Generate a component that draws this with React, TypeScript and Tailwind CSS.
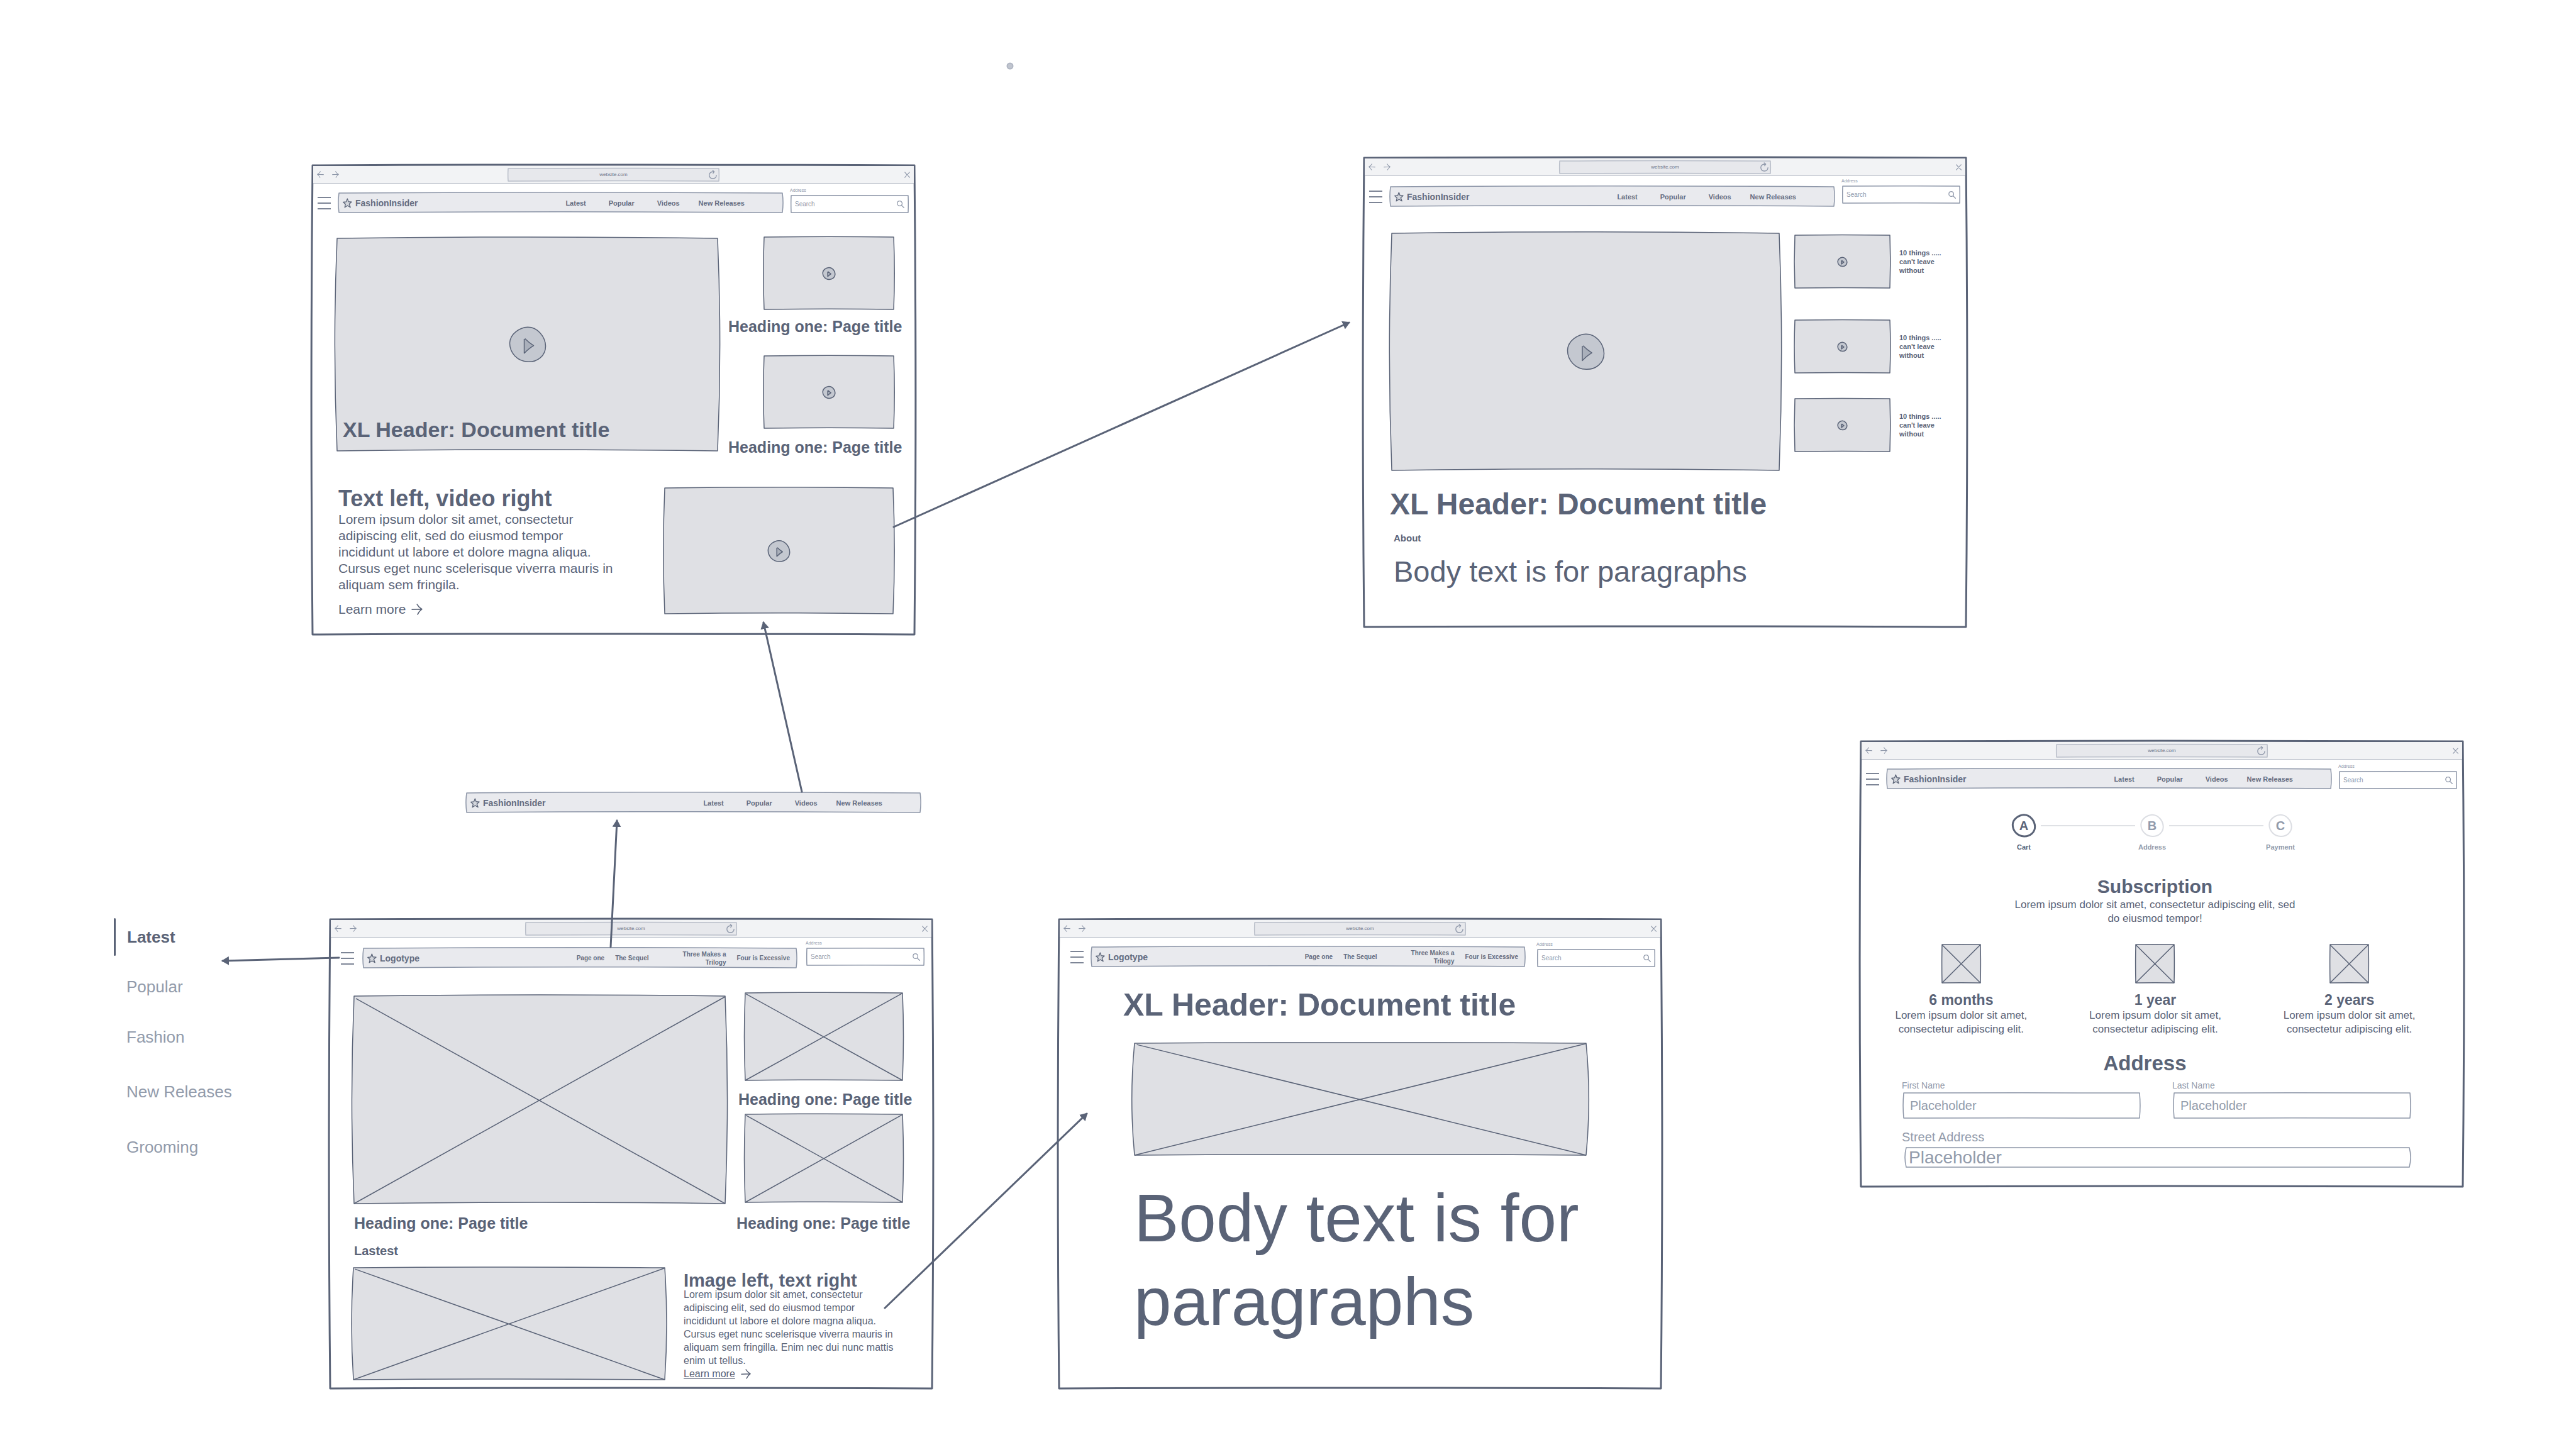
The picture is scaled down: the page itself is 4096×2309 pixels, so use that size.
import { useId, type ReactNode } from "react";
import { clsx } from "clsx";

/* Hand-drawn rectangle that stretches to its parent. */
function Outline({
  bow = 1.2,
  lift = 1.2,
  className = "inset-0 size-full fill-[#dfe0e4] stroke-[#5a6377]",
  width = 1.5,
  cross = false,
}: {
  bow?: number;
  lift?: number;
  className?: string;
  width?: number;
  cross?: boolean;
}) {
  return (
    <svg
      viewBox="0 0 100 100"
      preserveAspectRatio="none"
      aria-hidden="true"
      className={clsx("pointer-events-none absolute overflow-visible", className)}
      strokeWidth={width}
      strokeLinejoin="round"
    >
      <path
        vectorEffect="non-scaling-stroke"
        d={`M0,0 Q50,${-lift} 100,0 Q${100 + bow},50 100,100 Q50,${100 - lift} 0,100 Q${-bow},50 0,0 Z`}
      />
      {cross && (
        <path vectorEffect="non-scaling-stroke" fill="none" d="M0.5,1.2 L100,100 M0,100 L100,0.3" />
      )}
    </svg>
  );
}

const stroke = {
  fill: "none",
  stroke: "currentColor",
  strokeLinecap: "round" as const,
  strokeLinejoin: "round" as const,
};

function ArrowIcon({ className, flip = false }: { className: string; flip?: boolean }) {
  return (
    <svg viewBox="0 0 16 16" aria-hidden="true" className={clsx(className, flip && "-scale-x-100")} {...stroke} strokeWidth={1.5}>
      <path d="M1 8.2 L15 7.7 M8.2 1 C9.6 3.6 12 6 15 7.7 C12.4 9.6 10.2 12.2 9 15" />
    </svg>
  );
}

function ReloadIcon() {
  return (
    <svg viewBox="0 0 18 20" aria-hidden="true" className="h-[15px] w-[13px]" {...stroke} strokeWidth={1.8}>
      <path d="M16.8 11.5 C16.6 16 13.4 19 9 19 C4.4 18.8 1.2 15.6 1.1 11 C1.4 6.4 5 3.8 11.4 3.8 M8.6 1 L12 3.9 L9.4 7.4" />
    </svg>
  );
}

function CloseIcon() {
  return (
    <svg viewBox="0 0 12 13" aria-hidden="true" className="h-[10px] w-[9px]" {...stroke} strokeWidth={1.6}>
      <path d="M1 1 C4 5 8 9 11.4 12 M11 1 C8 4 4 8.5 1 12" />
    </svg>
  );
}

function SearchIcon() {
  return (
    <svg viewBox="0 0 17 17" aria-hidden="true" className="size-[12px]" {...stroke} strokeWidth={1.8}>
      <path d="M6.4 1 C9.4 0.9 12 3.4 12 6.6 C12 9.8 9.5 12 6.7 11.9 C3.6 11.9 1.2 9.4 1.2 6.4 C1.3 3.3 3.5 1 6.4 1 Z M10.6 10.6 L16 16" />
    </svg>
  );
}

function StarIcon() {
  return (
    <svg
      viewBox="0 0 20 21"
      aria-hidden="true"
      className="h-[16px] w-[15px] shrink-0 fill-[#d3d6dc] stroke-[#5a6377]"
      strokeWidth={1.7}
      strokeLinejoin="round"
    >
      <path d="M9.8 1.2 L12.1 7.5 L18.8 7.9 L13.7 12.5 L16.2 19.5 L10.1 15.8 L4.2 19.6 L5.8 12.7 L1 8.5 L7.4 7.6 Z" />
    </svg>
  );
}

const blob =
  "M200,63 C265,62 318,125 320,190 C320,255 265,297 203,295 C130,293 80,235 80,170 C82,105 150,65 200,63 Z";

function PlayButton({ className }: { className: string }) {
  return (
    <button type="button" aria-label="Play video" className={clsx("relative", className)}>
      <svg viewBox="78 60 244 240" className="size-full overflow-visible stroke-[#5a6377]" strokeWidth={1.5} strokeLinejoin="round">
        <path vectorEffect="non-scaling-stroke" className="fill-[#c4c8d0]" d={blob} />
        <path vectorEffect="non-scaling-stroke" className="fill-[#aab0bb]" d="M177,142 V238 Q210,204 240,187 Q210,168 182,140" />
      </svg>
    </button>
  );
}

function Video({ className, play, children }: { className: string; play: string; children?: ReactNode }) {
  return (
    <div className={clsx("relative grid shrink-0 place-items-center", className)}>
      <Outline />
      <PlayButton className={play} />
      {children}
    </div>
  );
}

function Picture({ className, bow, lift }: { className: string; bow?: number; lift?: number }) {
  return (
    <div role="img" aria-label="Image placeholder" className={clsx("relative shrink-0", className)}>
      <Outline cross bow={bow} lift={lift} />
    </div>
  );
}

function NavBar({ brand, className, children }: { brand: string; className?: string; children: ReactNode }) {
  return (
    <nav aria-label={brand} className={clsx("flex h-[31px] items-center pl-[6px]", className)}>
      <Outline bow={0.3} lift={8} className="inset-0 size-full fill-[#e9eaee] stroke-[#8d96a8]" />
      <a href="#home" className="relative flex items-center gap-[5px] text-[14px] leading-[20px] font-bold text-[#646c80]">
        <StarIcon />
        {brand}
      </a>
      {children}
    </nav>
  );
}

function FashionNav({ className }: { className?: string }) {
  return (
    <NavBar brand="FashionInsider" className={className}>
      <div className="relative mr-[60px] ml-auto flex gap-[36px] text-[11px] leading-[16px] font-bold text-[#646c80]">
        <a href="#latest">Latest</a>
        <a href="#popular">Popular</a>
        <a href="#videos">Videos</a>
        <a href="#new" className="-ml-[6px]">
          New Releases
        </a>
      </div>
    </NavBar>
  );
}

function LogotypeNav({ className }: { className?: string }) {
  return (
    <NavBar brand="Logotype" className={className}>
      <div className="relative mr-[10px] ml-auto flex items-center gap-[17px] text-[10px] leading-[13px] font-bold text-[#646c80]">
        <a href="#one">Page one</a>
        <a href="#two">The Sequel</a>
        <a href="#three" className="ml-[30px] w-[76px] text-right">
          Three Makes a Trilogy
        </a>
        <a href="#four">Four is Excessive</a>
      </div>
    </NavBar>
  );
}

function SearchField({ className }: { className?: string }) {
  const id = useId();
  return (
    <div className={clsx("shrink-0", className)}>
      <label htmlFor={id} className="block text-[7px] leading-[8px] text-[#8f98aa]">
        Address
      </label>
      <div className="relative mt-1 ml-[2px] flex h-[27px] items-center justify-between px-[6px] text-[#8f98aa]">
        <Outline bow={0.3} lift={2} className="inset-0 size-full fill-white stroke-[#8d96a8]" />
        <input
          id={id}
          type="search"
          placeholder="Search"
          className="relative w-0 min-w-0 flex-1 bg-transparent text-[10px] leading-[16px] outline-none placeholder:text-[#8f98aa]"
        />
        <button type="button" aria-label="Search" className="relative">
          <SearchIcon />
        </button>
      </div>
    </div>
  );
}

function Browser({
  className,
  toolbar,
  nav,
  search,
  children,
}: {
  className: string;
  toolbar: string;
  nav: ReactNode;
  search: string;
  children: ReactNode;
}) {
  return (
    <section className={clsx("absolute flex w-[961px] flex-col p-[2px]", className)}>
      <div className="relative flex-1">
        <Outline bow={0.4} lift={0.3} width={3} className="inset-0 size-full fill-white stroke-[#5a6377]" />
        <div className="relative mx-[1px] mt-[1px] flex h-[28px] items-center border-b border-[#b9bec9] bg-[#f2f3f5] px-[6px] text-[#8f98aa]">
          <div className="flex flex-1 gap-[13px]">
            <button type="button" aria-label="Back">
              <ArrowIcon flip className="size-[11px]" />
            </button>
            <button type="button" aria-label="Forward">
              <ArrowIcon className="size-[11px]" />
            </button>
          </div>
          <div className="relative flex h-[20px] w-[335px] items-center">
            <Outline bow={0.2} lift={5} className="inset-0 size-full fill-[#e7e8ec] stroke-[#b9bec9]" />
            <input
              aria-label="Page address"
              readOnly
              value="website.com"
              className="relative w-full bg-transparent text-center text-[8px] leading-[12px] text-[#6b7387] outline-none"
            />
            <button type="button" aria-label="Reload" className="absolute right-[3px]">
              <ReloadIcon />
            </button>
          </div>
          <div className="flex flex-1 justify-end">
            <button type="button" aria-label="Close">
              <CloseIcon />
            </button>
          </div>
        </div>
        <div className="relative -mx-[2px]">
          <header className={clsx("flex items-end", toolbar)}>
            <button type="button" aria-label="Menu" className="mb-[5px] flex w-[21px] shrink-0 flex-col gap-[7px]">
              <span className="h-[2px] bg-[#7d8596]" />
              <span className="h-[2px] bg-[#7d8596]" />
              <span className="h-[2px] bg-[#7d8596]" />
            </button>
            {nav}
            <SearchField className={search} />
          </header>
          {children}
        </div>
      </div>
    </section>
  );
}

function Heading({ className }: { className?: string }) {
  return <h3 className={clsx("text-[25px] leading-[32px] font-bold whitespace-nowrap", className)}>Heading one: Page title</h3>;
}

function HomeVideoPage() {
  return (
    <Browser
      className="top-[261px] left-[495px] h-[750px]"
      toolbar="h-[46px] pr-[12px] pl-[10px]"
      nav={<FashionNav className="relative mr-[12px] ml-[13px] flex-1" />}
      search="w-[188px]"
    >
      <div className="flex justify-between pr-[18px] pl-[41px]">
        <Video className="mt-[41px] h-[338px] w-[605px]" play="size-[58px]">
          <h2 className="absolute bottom-[14px] left-[9px] text-[34px] leading-[40px] font-bold">XL Header: Document title</h2>
        </Video>
        <div className="flex w-[280px] flex-col">
          <Video className="mt-[39px] mr-[17px] h-[115px] w-[206px] self-end" play="size-[20px]" />
          <Heading className="mt-[11px]" />
          <Video className="mt-[31px] mr-[17px] h-[115px] w-[206px] self-end" play="size-[20px]" />
          <Heading className="mt-[14px]" />
        </div>
      </div>
      <div className="mt-[46px] flex justify-between pr-[36px] pl-[43px]">
        <div className="text-[21px] leading-[26px]">
          <h2 className="text-[36px] leading-[40px] font-bold">Text left, video right</h2>
          <p className="w-[450px]">
            Lorem ipsum dolor sit amet, consectetur
            <br />
            adipiscing elit, sed do eiusmod tempor
            <br />
            incididunt ut labore et dolore magna aliqua.
            <br />
            Cursus eget nunc scelerisque viverra mauris in
            <br />
            aliquam sem fringila.
          </p>
          <a href="#more" className="mt-[13px] flex items-center gap-[9px]">
            Learn more
            <ArrowIcon className="size-[18px]" />
          </a>
        </div>
        <Video className="mt-[3px] h-[200px] w-[363px]" play="size-[35px]" />
      </div>
    </Browser>
  );
}

function VideoPage() {
  return (
    <Browser
      className="top-[249px] left-[2167px] h-[750px]"
      toolbar="h-[48px] pr-[12px] pl-[10px]"
      nav={<FashionNav className="relative mr-[12px] ml-[13px] flex-1" />}
      search="mb-[5px] w-[188px]"
    >
      <div className="flex gap-[25px] pl-[46px]">
        <Video className="mt-[43px] h-[377px] w-[616px]" play="size-[59px]" />
        <ul className="mt-[46px] text-[11px] leading-[14px] font-bold">
          {["mb-[51px]", "mb-[41px]", ""].map((gap, i) => (
            <li key={i} className={clsx("flex items-center gap-[15px]", gap)}>
              <Video className="h-[84px] w-[151px]" play="size-[15px]" />
              <p>
                10 things .....
                <br />
                can't leave
                <br />
                without
              </p>
            </li>
          ))}
        </ul>
      </div>
      <div className="mt-[26px] pl-[43px]">
        <h1 className="text-[48px] leading-[56px] font-bold">XL Header: Document title</h1>
        <h2 className="mt-[16px] ml-[6px] text-[15px] leading-[20px] font-bold">About</h2>
        <p className="mt-[17px] ml-[6px] text-[47px] leading-[52px]">Body text is for paragraphs</p>
      </div>
    </Browser>
  );
}

function HomeImagePage() {
  return (
    <Browser
      className="top-[1460px] left-[523px] h-[750px]"
      toolbar="h-[48px] pr-[15px] pl-[19px]"
      nav={<LogotypeNav className="relative mr-[15px] ml-[15px] flex-1" />}
      search="mb-[4px] w-[188px]"
    >
      <div className="flex justify-between pr-[33px] pl-[40px]">
        <div className="pt-[45px]">
          <Picture className="h-[330px] w-[590px]" />
          <Heading className="mt-[15px]" />
          <h3 className="mt-[16px] text-[20px] leading-[24px] font-bold">Lastest</h3>
        </div>
        <div className="w-[280px] pt-[40px]">
          <Picture className="ml-[14px] h-[139px] w-[250px]" />
          <Heading className="mt-[14px] ml-[3px]" />
          <Picture className="mt-[8px] ml-[14px] h-[140px] w-[250px]" />
          <Heading className="mt-[17px]" />
        </div>
      </div>
      <div className="mt-[15px] flex gap-[30px] pl-[39px]">
        <Picture className="h-[178px] w-[495px]" />
        <div className="mt-[4px] text-[16px] leading-[21px]">
          <h2 className="text-[29px] leading-[32px] font-bold">Image left, text right</h2>
          <p className="-mt-1">
            Lorem ipsum dolor sit amet, consectetur
            <br />
            adipiscing elit, sed do eiusmod tempor
            <br />
            incididunt ut labore et dolore magna aliqua.
            <br />
            Cursus eget nunc scelerisque viverra mauris in
            <br />
            aliquam sem fringilla. Enim nec dui nunc mattis
            <br />
            enim ut tellus.
          </p>
          <a href="#more" className="flex items-center gap-[9px]">
            <span className="underline underline-offset-2">Learn more</span>
            <ArrowIcon className="size-[16px]" />
          </a>
        </div>
      </div>
    </Browser>
  );
}

function ArticlePage() {
  return (
    <Browser
      className="top-[1460px] left-[1682px] h-[750px]"
      toolbar="h-[46px] pr-[12px] pl-[20px]"
      nav={<LogotypeNav className="relative mr-[19px] ml-[13px] flex-1" />}
      search="w-[188px]"
    >
      <div className="pl-[104px]">
        <h1 className="mt-[31px] text-[50px] leading-[60px] font-bold">XL Header: Document title</h1>
        <Picture className="mt-[31px] ml-[18px] h-[178px] w-[718px]" />
        <p className="mt-[34px] ml-[17px] text-[107px] leading-[133px]">
          Body text is for
          <br />
          paragraphs
        </p>
      </div>
    </Browser>
  );
}

function Step({ letter, name, active = false }: { letter: string; name: string; active?: boolean }) {
  return (
    <li className={clsx("flex w-[54px] flex-col items-center", active ? "text-[#5a6377]" : "text-[#929bab]")}>
      <span className="relative grid size-[36px] place-items-center text-[20px] leading-[24px] font-bold">
        <svg
          viewBox="78 60 244 240"
          aria-hidden="true"
          className={clsx("absolute inset-0 size-full overflow-visible", active ? "stroke-[#5a6377]" : "stroke-[#dcdee3]")}
          fill="none"
          strokeWidth={active ? 3 : 2}
        >
          <path vectorEffect="non-scaling-stroke" d={blob} />
        </svg>
        {letter}
      </span>
      <span className="mt-[8px] text-[11px] leading-[16px] font-bold">{name}</span>
    </li>
  );
}

function TextField({
  label,
  labelClass,
  boxClass,
  inputClass,
  className,
}: {
  label: string;
  labelClass: string;
  boxClass: string;
  inputClass: string;
  className?: string;
}) {
  const id = useId();
  return (
    <div className={className}>
      <label htmlFor={id} className={clsx("block text-[#929bab]", labelClass)}>
        {label}
      </label>
      <div className={clsx("relative flex items-center", boxClass)}>
        <Outline bow={0.5} lift={0.8} className="inset-0 size-full fill-white stroke-[#8d96a8]" />
        <input
          id={id}
          type="text"
          placeholder="Placeholder"
          className={clsx("relative w-full bg-transparent outline-none placeholder:text-[#929bab]", inputClass)}
        />
      </div>
    </div>
  );
}

function CheckoutPage() {
  return (
    <Browser
      className="top-[1177px] left-[2957px] h-[712px]"
      toolbar="h-[46px] pr-[12px] pl-[10px]"
      nav={<FashionNav className="relative mr-[12px] ml-[13px] flex-1" />}
      search="w-[188px]"
    >
      <ol className="mt-[41px] ml-[234px] flex">
        <Step letter="A" name="Cart" active />
        <li aria-hidden="true" className="mt-[17px] h-[2px] w-[150px] bg-[#dfe1e5]" />
        <Step letter="B" name="Address" />
        <li aria-hidden="true" className="mt-[17px] h-[2px] w-[150px] bg-[#dfe1e5]" />
        <Step letter="C" name="Payment" />
      </ol>
      <div className="mt-[37px] pr-[22px] text-center text-[17px] leading-[22px]">
        <h2 className="text-[30px] leading-[36px] font-bold">Subscription</h2>
        <p>
          Lorem ipsum dolor sit amet, consectetur adipiscing elit, sed
          <br />
          do eiusmod tempor!
        </p>
      </div>
      <div className="mt-[30px] mr-[28px] ml-[7px] grid grid-cols-3 text-center text-[17px] leading-[22px]">
        {["6 months", "1 year", "2 years"].map((term) => (
          <div key={term} className="flex flex-col items-center">
            <Picture className="size-[61px]" />
            <h3 className="mt-[13px] text-[23px] leading-[28px] font-bold">{term}</h3>
            <p>
              Lorem ipsum dolor sit amet,
              <br />
              consectetur adipiscing elit.
            </p>
          </div>
        ))}
      </div>
      <form>
        <h2 className="mt-[23px] pr-[54px] text-center text-[33px] leading-[40px] font-bold">Address</h2>
        <div className="mt-[6px] flex gap-[52px] pl-[67px]">
          <TextField
            label="First Name"
            labelClass="text-[14px] leading-[18px]"
            boxClass="mt-[3px] ml-[3px] h-[40px] w-[375px]"
            inputClass="px-[10px] text-[20px] leading-[26px]"
          />
          <TextField
            label="Last Name"
            labelClass="text-[14px] leading-[18px]"
            boxClass="mt-[3px] ml-[3px] h-[40px] w-[375px]"
            inputClass="px-[10px] text-[20px] leading-[26px]"
          />
        </div>
        <TextField
          className="mt-[18px] pl-[67px]"
          label="Street Address"
          labelClass="text-[20px] leading-[24px]"
          boxClass="mt-[5px] ml-[7px] h-[31px] w-[800px]"
          inputClass="px-[4px] text-[28px] leading-[31px]"
        />
      </form>
    </Browser>
  );
}

function SideMenu() {
  return (
    <nav aria-label="Sections" className="absolute top-[1460px] left-[181px] flex flex-col text-[26px] leading-[32px] text-[#929bab]">
      <a href="#latest" className="flex items-center gap-[18px] font-bold text-[#5a6377]">
        <span className="h-[60px] w-[3px] rounded-full bg-[#5a6377]" />
        Latest
      </a>
      <a href="#popular" className="mt-[33px] ml-[20px]">
        Popular
      </a>
      <a href="#fashion" className="mt-[48px] ml-[20px]">
        Fashion
      </a>
      <a href="#new" className="mt-[55px] ml-[20px]">
        New Releases
      </a>
      <a href="#grooming" className="mt-[56px] ml-[20px]">
        Grooming
      </a>
    </nav>
  );
}

const links: [number, number, number, number][] = [
  [1421, 838, 2145, 513],
  [1275, 1259, 1214, 990],
  [971, 1506, 981, 1305],
  [539, 1523, 354, 1528],
  [1407, 2080, 1728, 1771],
];

function Connectors() {
  return (
    <svg
      aria-hidden="true"
      className="pointer-events-none absolute top-0 left-0 size-full"
      stroke="#5a6377"
      strokeWidth={3}
      strokeLinecap="round"
    >
      <defs>
        <marker id="tip" viewBox="0 0 12 14" refX="10" refY="7" markerWidth="12" markerHeight="14" markerUnits="userSpaceOnUse" orient="auto">
          <path d="M0,0 L12,7 L0,14 Z" fill="#5a6377" stroke="none" />
        </marker>
      </defs>
      {links.map(([x1, y1, x2, y2]) => (
        <line key={x1} x1={x1} y1={y1} x2={x2} y2={y2} markerEnd="url(#tip)" />
      ))}
      <circle cx={1606} cy={105} r={4.5} fill="#c0c5cf" stroke="#b0b6c3" strokeWidth={2} />
    </svg>
  );
}

export default function App() {
  return (
    <main className="relative min-h-screen w-full overflow-hidden bg-white font-['Liberation_Sans',Arial,sans-serif] text-[#5a6377]">
      <HomeVideoPage />
      <VideoPage />
      <FashionNav className="absolute top-[1261px] left-[742px] w-[721px]" />
      <SideMenu />
      <HomeImagePage />
      <ArticlePage />
      <CheckoutPage />
      <Connectors />
    </main>
  );
}
